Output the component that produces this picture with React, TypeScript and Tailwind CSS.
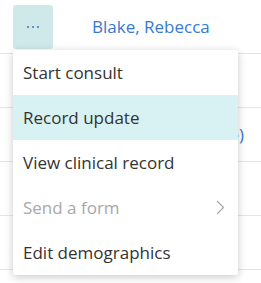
import React from "react";

const font = { fontFamily: '"Open Sans", "Noto Sans", sans-serif' };

function Row({ children }: { children?: React.ReactNode }) {
  return <div className="h-[54px] border-b border-[#d3eef0] flex items-center">{children}</div>;
}

export default function App() {
  const items = [
    { label: "Start consult" },
    { label: "Record update", active: true },
    { label: "View clinical record" },
    { label: "Send a form", disabled: true, sub: true },
    { label: "Edit demographics" },
  ];
  return (
    <div className="relative w-[261px] h-[283px] bg-white overflow-hidden text-[17px]" style={font}>
      <div className="border-t border-[#d3eef0] -mt-px">
        <Row>
          <div className="ml-[13px] w-[40px] h-[44px] rounded-[3px] bg-[#cfe8ea] flex items-center justify-center gap-[3px] mt-[1px]">
            <span className="w-[2px] h-[2px] rounded-full bg-[#3a78c8]" />
            <span className="w-[2px] h-[2px] rounded-full bg-[#3a78c8]" />
            <span className="w-[2px] h-[2px] rounded-full bg-[#3a78c8]" />
          </div>
          <span className="ml-[39px] text-[#3679cf] whitespace-nowrap">Blake, Rebecca</span>
        </Row>
        <Row />
        <Row>
          <div className="w-[244px] text-right whitespace-nowrap text-[#3679cf]">Nguyen, Anh (Annie)</div>
        </Row>
        <Row />
        <Row />
      </div>
      <div className="absolute left-[13px] top-[50px] w-[225px] bg-white rounded-[3px] shadow-[0_2px_8px_rgba(0,0,0,0.22)] overflow-hidden">
        {items.map((it) => (
          <div
            key={it.label}
            className={`h-[45px] flex items-center pl-[10px] pr-[13px] justify-between ${
              it.active ? "bg-[#d8f1f2]" : ""
            } ${it.disabled ? "text-[#a8a8a8]" : "text-[#333333]"}`}
          >
            <span className="whitespace-nowrap">{it.label}</span>
            {it.sub && (
              <svg width="9" height="15" viewBox="0 0 9 15" fill="none">
                <path d="M1 1l6.5 6.5L1 14" stroke="#a8a8a8" strokeWidth="1.2" />
              </svg>
            )}
          </div>
        ))}
      </div>
    </div>
  );
}
